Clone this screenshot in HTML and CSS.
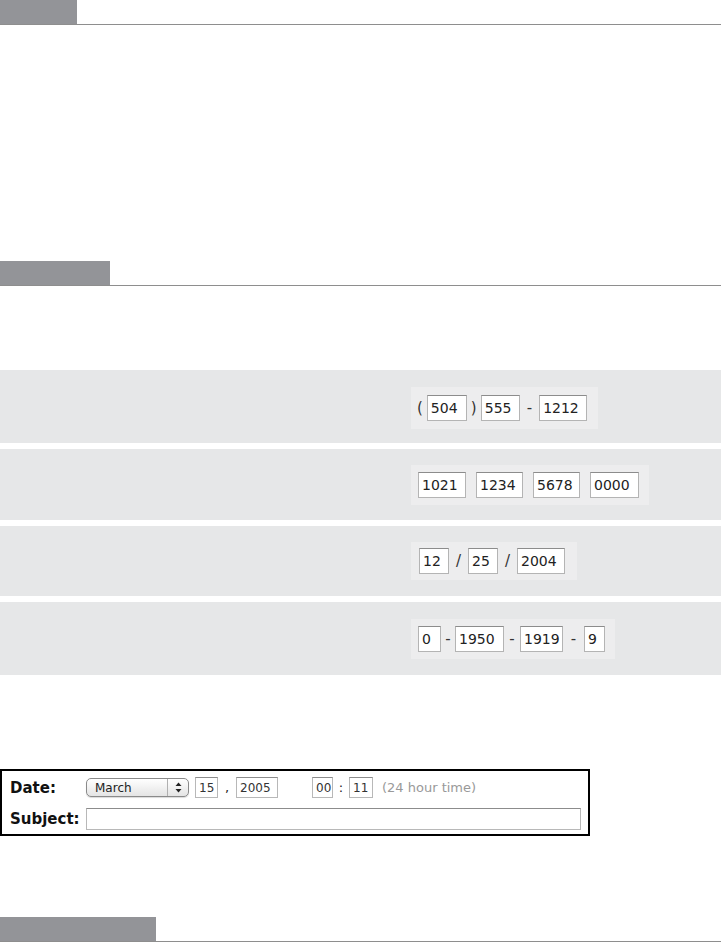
FILE: index.html
```html
<!DOCTYPE html>
<html lang="en">
<head>
    <meta charset="UTF-8">
    <meta name="viewport" content="width=device-width, initial-scale=1.0">
    <title>Input Formats</title>
    <link rel="stylesheet" href="styles.css">
</head>
<body>
    <div class="section-head head-one"><div class="tab tab-one"></div></div>

    <div class="section-head head-two"><div class="tab tab-two"></div></div>

    <div class="field-list">
        <div class="field-row row-phone">
            <div class="widget">
                <span class="sep">(</span>
                <input class="box w40" type="text" value="504" readonly>
                <span class="sep">)</span>
                <input class="box w39" type="text" value="555" readonly>
                <span class="sep dash">-</span>
                <input class="box w48" type="text" value="1212" readonly>
            </div>
        </div>
        <div class="field-row row-card">
            <div class="widget card">
                <input class="box w48" type="text" value="1021" readonly>
                <input class="box w47" type="text" value="1234" readonly>
                <input class="box w47" type="text" value="5678" readonly>
                <input class="box w49" type="text" value="0000" readonly>
            </div>
        </div>
        <div class="field-row row-date">
            <div class="widget date">
                <input class="box w30" type="text" value="12" readonly>
                <span class="sep slash">/</span>
                <input class="box w30" type="text" value="25" readonly>
                <span class="sep slash">/</span>
                <input class="box w48" type="text" value="2004" readonly>
            </div>
        </div>
        <div class="field-row row-isbn">
            <div class="widget isbn">
                <input class="box w23" type="text" value="0" readonly>
                <span class="sep dash d14">-</span>
                <input class="box w49" type="text" value="1950" readonly>
                <span class="sep dash d16">-</span>
                <input class="box w43" type="text" value="1919" readonly>
                <span class="sep dash d21">-</span>
                <input class="box w21" type="text" value="9" readonly>
            </div>
        </div>
    </div>

    <form class="entry-form">
        <label class="form-label">Date:</label>
        <div class="form-line">
            <div class="popup">
                <span class="popup-text">March</span>
                <span class="popup-arrows">
                    <svg width="7" height="11" viewBox="0 0 7 11">
                        <path d="M3.5 0.5 L6.5 4 L0.5 4 Z" fill="#222"/>
                        <path d="M3.5 10.5 L6.5 7 L0.5 7 Z" fill="#222"/>
                    </svg>
                </span>
            </div>
            <input class="small-box s23" type="text" value="15" readonly>
            <span class="comma">,</span>
            <input class="small-box s42" type="text" value="2005" readonly>
            <input class="small-box s21 time-start" type="text" value="00" readonly>
            <span class="colon">:</span>
            <input class="small-box s24" type="text" value="11" readonly>
            <span class="hint">(24 hour time)</span>
        </div>
        <label class="form-label">Subject:</label>
        <div class="form-line">
            <input class="subject-box" type="text" readonly>
        </div>
    </form>

    <div class="section-head head-three"><div class="tab tab-three"></div></div>
</body>
</html>
```

FILE: styles.css
```css
body {
    margin: 0;
    background: #fff;
    font-family: "DejaVu Sans", Verdana, sans-serif;
    color: #222;
}

.section-head {
    height: 24px;
    border-bottom: 1px solid #8e8e8e;
}

.tab {
    height: 24px;
    background-color: #939498;
}

.tab-one { width: 77px; }
.tab-two { width: 110px; }
.tab-three { width: 156px; }

.head-two { margin-top: 236px; }
.head-three { margin-top: 81px; }

.field-list {
    margin-top: 84px;
}

.field-row {
    display: flex;
    align-items: center;
    padding-left: 411px;
    background-color: #e6e7e8;
    margin-bottom: 6px;
}

.row-phone { height: 73px; padding-top: 3px; box-sizing: border-box; }
.row-card { height: 71px; }
.row-date { height: 70px; }
.row-isbn { height: 73px; }

.widget {
    display: flex;
    align-items: center;
    gap: 3px;
    background-color: #ededee;
    padding: 8px 11px 8px 5px;
}

.widget.card {
    gap: 10px;
    padding: 7px 10px 7px 7px;
}

.widget.date {
    gap: 0;
    padding: 6px 12px 6px 8px;
}

.widget.isbn {
    gap: 0;
    padding: 7px 10px 7px 7px;
}

.sep {
    font-size: 15px;
    color: #333;
    padding: 0 1px;
}

.sep.dash {
    padding: 0 4px;
}

.slash {
    width: 19px;
    text-align: center;
    padding: 0;
}

.isbn .dash {
    text-align: center;
    padding: 0;
}

.d14 { width: 14px; }
.d16 { width: 16px; }
.d21 { width: 21px; }

.box {
    box-sizing: border-box;
    height: 26px;
    padding: 0 0 0 3px;
    border: 1px solid #b4b4b4;
    border-top-color: #8c8c8c;
    background: #fff;
    font-family: "DejaVu Sans", Verdana, sans-serif;
    font-size: 14px;
    color: #222;
    outline: none;
}

.w21 { width: 21px; }
.w23 { width: 23px; }
.w30 { width: 30px; }
.w39 { width: 39px; }
.w40 { width: 40px; }
.w43 { width: 43px; }
.w47 { width: 47px; }
.w48 { width: 48px; }
.w49 { width: 49px; }

.entry-form {
    margin-top: 94px;
    width: 590px;
    box-sizing: border-box;
    border: 2px solid #000;
    display: grid;
    grid-template-columns: 76px 1fr;
    row-gap: 10px;
    align-items: center;
    padding: 6px 8px 4px 8px;
}

.form-label {
    font-weight: bold;
    font-size: 15px;
    color: #111;
}

.form-line {
    display: flex;
    align-items: center;
}

.popup {
    box-sizing: border-box;
    width: 103px;
    height: 19px;
    display: flex;
    align-items: center;
    border: 1px solid #8a8a8a;
    border-radius: 5px;
    background: linear-gradient(#ffffff, #e4e4e4);
    box-shadow: 0 1px 1px rgba(0, 0, 0, 0.15);
}

.popup-text {
    flex: 1;
    padding-left: 8px;
    font-size: 12px;
    color: #222;
}

.popup-arrows {
    width: 20px;
    height: 100%;
    display: flex;
    align-items: center;
    justify-content: center;
    border-left: 1px solid #b0b0b0;
}

.small-box {
    box-sizing: border-box;
    height: 21px;
    padding: 0 0 0 3px;
    border: 1px solid #b8b8b8;
    border-top-color: #8c8c8c;
    background: #fff;
    font-family: "DejaVu Sans", Verdana, sans-serif;
    font-size: 12px;
    color: #333;
    outline: none;
}

.s21 { width: 21px; }
.s23 { width: 23px; margin-left: 6px; }
.s24 { width: 24px; }
.s42 { width: 42px; }

.time-start { margin-left: 34px; }

.comma {
    width: 18px;
    text-align: center;
    font-size: 13px;
}

.colon {
    width: 16px;
    text-align: center;
    font-size: 13px;
}

.hint {
    margin-left: 9px;
    font-size: 13px;
    color: #999;
}

.subject-box {
    box-sizing: border-box;
    width: 495px;
    height: 22px;
    border: 1px solid #b8b8b8;
    border-top-color: #8c8c8c;
    background: #fff;
    outline: none;
}
```
